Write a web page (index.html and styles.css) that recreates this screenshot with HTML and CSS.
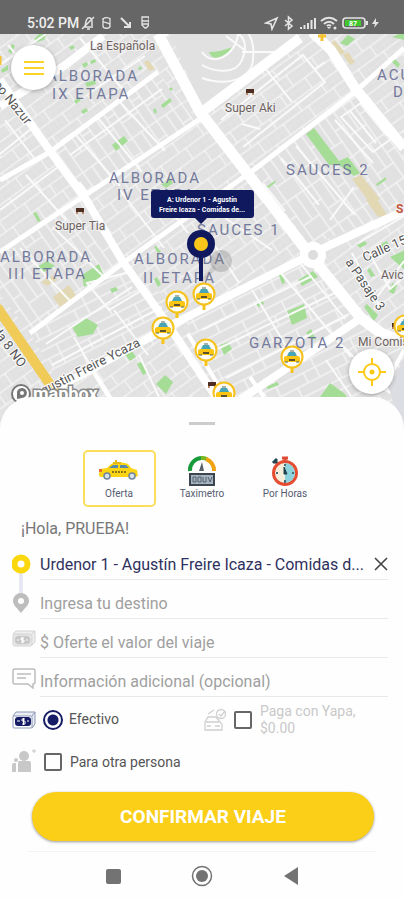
FILE: index.html
```html
<!DOCTYPE html>
<html lang="es">
<head>
  <meta charset="UTF-8">
  <meta name="viewport" content="width=device-width, initial-scale=1">
  <title>Confirmar viaje</title>
  <link rel="stylesheet" href="styles.css">
</head>
<body>
  <header class="status-bar">
    <span class="clock">5:02 PM</span>
    <svg class="status-left" width="68" height="16" viewBox="0 0 68 16" fill="none" stroke="#e4e4e4" stroke-width="1.5">
      <path d="M3 12h9M4 11c1-2 0-6 3-8 3-1 4 2 4 4v4M6 14h3M13 2L1 14"/>
      <path d="M29 4c-1-2-7-2-7 1v1c0 2 7 1 7 4v1c0 3-7 3-7 0M22 3v9M29 3v9" stroke-width="1.3"/>
      <path d="M40 3l9 9M43 12h6V7" stroke-width="2"/>
      <path d="M61 2h7v8l-3 3h-1l-3-3zM61 6h7M61 9h7" stroke-width="1.3"/>
    </svg>
    <svg class="status-right" width="116" height="16" viewBox="0 0 116 16" fill="none" stroke="#e4e4e4" stroke-width="1.6">
      <path d="M2 8l11-5-5 11-1-5z"/>
      <path d="M21 5l7 6-3.500 3V2L28 5l-7 6"/>
      <path d="M37 14v-2M40.500 14v-4M44 14V8M47.500 14V5M51 14V3" stroke-width="2"/>
      <path d="M57 6c5-4 11-4 16 0M60 9c3-3 7-3 10 0M63 11c1-1 3-1 4 0" stroke-width="2"/>
      <path d="M65 14l-2-2h4z" fill="#e4e4e4" stroke="none"/>
      <circle cx="71" cy="13" r="1.500" fill="#e4e4e4" stroke="none"/>
      <rect x="79" y="3" width="22" height="10" rx="3"/>
      <rect x="81" y="5" width="16" height="6" fill="#41c72c" stroke="none"/>
      <path d="M103 6v4" stroke-width="2"/>
      <text class="battery-text" x="89" y="11" text-anchor="middle">87</text>
      <path d="M112 3l-4 6h3l-1 4 5-6h-3z" fill="#e4e4e4" stroke="none"/>
    </svg>
  </header>

  <main class="map">
    <svg class="map-canvas" viewBox="0 34 404 400" preserveAspectRatio="xMidYMin slice" role="img" aria-label="Mapa">
      <defs>
        <pattern id="lots" width="31" height="38" patternUnits="userSpaceOnUse" patternTransform="rotate(-36)">
          <path d="M0 1h31M0 14h31M0 27h31M1 0v14M15 14v13M24 27v11" stroke="#f4f4f4" stroke-width="1.500" fill="none"/>
          <path d="M0 7h31M0 20h31M0 33h31M5 0v38M10 0v38M20 0v38M27 0v38" stroke="#e8e8e8" stroke-width="0.600" fill="none"/>
        </pattern>
        <pattern id="blocks" width="47" height="30" patternUnits="userSpaceOnUse" patternTransform="rotate(55)">
          <path d="M0 1h47M0 11h47M0 20h30M1 0v30M30 11v19M18 0v11" stroke="#f4f4f4" stroke-width="1.500" fill="none"/>
        </pattern>
        <pattern id="garzota" width="44" height="32" patternUnits="userSpaceOnUse" patternTransform="rotate(-27)">
          <path d="M0 1h44M0 12h44M0 22h44M1 0v12M26 12v20M13 22v10" stroke="#f4f4f4" stroke-width="1.500" fill="none"/>
        </pattern>
        <g id="taxi-pin">
          <path d="M0 10v6" stroke="#f6c21c" stroke-width="3"/>
          <circle r="10.500" fill="#fffdf3" stroke="#f6c21c" stroke-width="2"/>
          <path d="M-5-1l2-4h6l2 4z" fill="#48a5b5"/>
          <path d="M-8 1c0-2 3-2 3-2H5s3 0 3 2v4H-8z" fill="#fbc511"/>
          <path d="M-3 3h6" stroke="#5c5230" stroke-width="2"/>
          <path d="M-7 5h3M4 5h3M-2-6h4" stroke="#4e685c"/>
        </g>
        <g id="shop">
          <path d="M-4-3h8v4h-8z" fill="#4e2e20"/>
          <path d="M-3 1v2M3 1v2" stroke="#b98968" stroke-width="2"/>
        </g>
      </defs>

      <rect y="34" width="404" height="400" fill="#e1e1e1"/>
      <rect y="34" width="404" height="400" fill="url(#lots)"/>
      <path d="M50 152L158 72 197 120 88 195zM0 258L85 195 125 262 30 333 0 295zM255 172L355 94 404 153V210L310 245z" fill="#e1e1e1"/>
      <path d="M50 152L158 72 197 120 88 195zM0 258L85 195 125 262 30 333 0 295zM255 172L355 94 404 153V210L310 245z" fill="url(#blocks)"/>
      <path d="M30 333L125 262 187 317 60 385zM187 317L305 257 404 345V434H215z" fill="#e1e1e1"/>
      <path d="M30 333L125 262 187 317 60 385zM187 317L305 257 404 345V434H215z" fill="url(#garzota)"/>
      <path d="M170 34h130l-98 74z" fill="#e1e1e1"/>

      <!-- parks and yellow lots -->
      <g fill="#a5dd96">
        <path d="M34 39l6-6h7l-3 7-7 2zM8 51l4-7 3 2-4 8zM1 70l7-5v5l-6 3zM69 47l4-2 2 3-4 2z"/>
        <path d="M82 64l5-2 1 3-4 3zM90 61l5-2 1 3-5 2zM85 83l10-3 1 4-9 3zM74 101l5-4 2 3-5 4zM81 111l5-3 2 3-5 3zM138 68l3-2 1 3-3 1z"/>
        <path d="M112 145l12-9 4 5-12 10zM161 105l9-7 2 3-9 7zM153 110l2-2 2 4-2 2zM169 89l2-2 2 2-2 2z"/>
        <path d="M306 134l8-6 25 33 9-4 12 16-6 3-15-11-10 0zM340 43l8-8 7 4-8 7zM391 61l3-3 6 6-2 4zM392 37l7-3h5v6z"/>
        <path d="M209 52c8 0 15-2 24-5-3 5-7 8-14 10-6 2-8-1-10-5z"/>
        <path d="M82 275l17-11 5 12-20 11zM33 213l3-1 5 9-3 1zM35 268l12-7 8 5-11 6zM110 289l6-2 2 3-6 3zM72 327l14-9 12 7-5 9-15 3zM124 353l8-2 4 6-6 4zM137 364l4-2 7 10-5 3zM156 384l9-9 8 7-7 12zM154 247l2-1 5 6-3 1zM154 279l3-2 4 7-3 3z"/>
        <path d="M298 280l15-9 5 6-16 9zM256 303l6-4 2 5-6 3zM287 311l17-7 3 14-15 7zM279 275l4-1 2 9-3 1zM306 333l5-4 5 11-6-2zM220 345l8-3 4 7-8 6zM266 387l11-5 2 3-11 4zM320 397l10-14 15 11 6 10h-37zM364 307l3-3 11 11-4 6zM390 257l15-7v20zM379 245l8-4 2 4-7 3zM357 245l8-4 2 3-7 4zM367 270l3-2 5 8-4 1zM389 292l3-9 5 2-3 9z"/>
        <path d="M266 187l10-7-1 3-8 6zM376 184l10-7v3l-9 6zM161 184l6-2 2-5 4 6-7 5z"/>
      </g>
      <g fill="#e3d8b4">
        <path d="M329 46l5-6 11 12-4 3zM343 55l5-3 7 10-5 3zM352 179l9-4 19 24-10 4zM366 200l9-4 12 19-9 2zM144 62l4-2 7 9-6 2zM53 297l16-12 8 12-17 10zM41 282l13-7 3 5-10 6z"/>
      </g>

      <!-- streets -->
      <g fill="none" stroke="#fafafa" stroke-width="2">
        <path d="M202 65c12 7 34 10 40-5 5-12 4-20-3-26M202 78c22 8 49 3 51-18 1-12 0-18-4-26M202 52c11 16 34 3 36-18M242 52h34M226 36l21 16"/>
        <path d="M221 120l82-65 22 27-82 65M265 68l27 34M242 124l18 5M315 69l10-7M75 134l45 52M98 118l44 54M119 101l46 50M60 142l89-62M70 155l92-66"/>
        <path d="M281 158l38 47M263 183l22 28M296 146l59 69M335 120l38 43M341 117l27-19 30 36-25 18zM350 111l26 32M360 103l27 33"/>
        <path d="M252 290l34 56M279 271l72 86M301 264l44 55M202 330l110-54M211 352l128-61M226 378l122-63M326 360l25 36M343 346l31 32"/>
        <path d="M20 248l52 55M53 227l53 52M87 283l22 27 35-21-14-17zM46 344l86-57M52 365l110-58M74 337l23 40M114 310l34 45M98 376l14 22M139 355l20 42"/>
        <path d="M8 45l33 39M80 38l45 54M0 65l46-31M91 92l54-36M5 120l32 42M0 154l36-29M26 175l40 45M0 210l58-43M120 190l44 58M164 202l24 31"/>
        <path d="M360 242l44-26M370 255l20 34 14-12M374 301l30-40M352 253l27 52M330 220l24-33M225 218l47 32M239 283l-24-37"/>
      </g>
      <g fill="none" stroke="#fff" stroke-linejoin="round">
        <path d="M0 106L64 66 103 36" stroke-width="8"/>
        <path d="M0 180L50 152 158 72M0 252L87 194 200 119M30 333L127 260 255 169 355 92 404 48" stroke-width="5"/>
        <path d="M0 80L50 151 87 201 123 262 167 323 222 406" stroke-width="8"/>
        <path d="M158 34L200 112 268 200 310 255 361 318 381 333 404 342" stroke-width="11"/>
        <path d="M202 112L300 38M312 32L331 50 355 88 404 148" stroke-width="10"/>
        <path d="M404 211L330 245 187 317 57 388M361 318L234 404M87 197l-10-13" stroke-width="8"/>
        <path d="M168 34h-7M404 350l-20 38 20 12M188 334l39 66M250 377l14 20M90 366l22 36" stroke-width="4"/>
        <circle cx="313" cy="255" r="9" fill="#ddd" stroke-width="8"/>
      </g>
      <path d="M-3 307L62 402" stroke="#f0cb58" stroke-width="10"/>
      <path d="M0 56v9M322 34v7M318 36h8" stroke="#f5c331" stroke-width="3"/>
      <path d="M404 358l-15 31 15 45z" fill="#dcdce3"/>

      <g class="area-label">
        <text x="47" y="81">ALBORADA</text>
        <text x="52" y="99">IX ETAPA</text>
        <text x="109" y="183">ALBORADA</text>
        <text x="117" y="200">IV ETAPA</text>
        <text x="0" y="262">ALBORADA</text>
        <text x="8" y="279">III ETAPA</text>
        <text x="134" y="264">ALBORADA</text>
        <text x="143" y="283">II ETAPA</text>
        <text x="197" y="235">SAUCES 1</text>
        <text x="286" y="175">SAUCES 2</text>
        <text x="249" y="348">GARZOTA 2</text>
        <text x="377" y="80">ACU</text>
        <text x="393" y="97">D</text>
      </g>
      <g class="place-label">
        <text x="90" y="50">La Española</text>
        <text x="225" y="112">Super Aki</text>
        <text x="55" y="230">Super Tia</text>
        <text x="358" y="346">Mi Comis</text>
        <text x="381" y="279">Avic</text>
        <text class="alert" x="396" y="213">S</text>
      </g>
      <g class="street-label">
        <text transform="translate(-7 85) rotate(51)">eo Nazur</text>
        <text transform="translate(-8 331) rotate(53)">da 8 NO</text>
        <text transform="translate(36 399) rotate(-27)">Agustin Freire Ycaza</text>
        <text transform="translate(365 262) rotate(-24)">Calle 15t</text>
        <text transform="translate(345 262) rotate(56)">a Pasaje 3</text>
      </g>

      <use href="#shop" x="250" y="92"/>
      <use href="#shop" x="80" y="211"/>
      <use href="#shop" x="212" y="385"/>
      <use href="#shop" x="396" y="326"/>
      <use href="#taxi-pin" x="177" y="302"/>
      <use href="#taxi-pin" x="163" y="328"/>
      <use href="#taxi-pin" x="206" y="350"/>
      <use href="#taxi-pin" x="292" y="357"/>
      <use href="#taxi-pin" x="224" y="393"/>
      <use href="#taxi-pin" x="405" y="326"/>

      <circle cx="221" cy="261" r="11" fill="#777" opacity="0.300"/>
      <path d="M201 281l14-14" stroke="#777" stroke-width="4" opacity="0.250"/>
      <path d="M201 255v26" stroke="#10195e" stroke-width="4"/>
      <circle cx="201" cy="244" r="14" fill="#10195e"/>
      <circle cx="201" cy="244" r="7" fill="#fbc61a"/>
      <use href="#taxi-pin" x="204" y="294"/>
      <path d="M154 190h97q3 0 3 3v22q0 3-3 3h-44l-6 6-6-6h-41q-3 0-3-3v-22q0-3 3-3z" fill="#10195e"/>
      <g class="callout-text">
        <text x="202" y="202">A: Urdenor 1 - Agustín</text>
        <text x="202" y="212">Freire Icaza - Comidas de...</text>
      </g>

      <circle cx="21" cy="394" r="9" fill="#fff" stroke="#777" stroke-width="2"/>
      <path d="M17 399v-5a5 5 0 1 1 5 4z" fill="#777"/>
      <circle cx="22" cy="393" r="2" fill="#fff"/>
      <text class="map-logo" x="33" y="400">mapbox</text>
    </svg>

    <button class="round-button menu-button" type="button" aria-label="Menú">
      <svg width="20" height="16" viewBox="0 0 20 16" stroke="#fbd429" stroke-width="2"><path d="M0 2h20M0 8h20M0 14h20"/></svg>
    </button>
    <button class="round-button locate-button" type="button" aria-label="Mi ubicación">
      <svg width="28" height="28" viewBox="0 0 28 28" fill="none" stroke="#fbcb17" stroke-width="2"><circle cx="14" cy="14" r="8"/><circle cx="14" cy="14" r="2.500" fill="#fbcb17" stroke="none"/><path d="M14 0v7M14 21v7M0 14h7M21 14h7"/></svg>
    </button>
  </main>

  <form class="sheet">
    <div class="handle"></div>

    <div class="services">
      <button class="service selected" type="button">
        <svg width="42" height="30" viewBox="0 0 42 30">
          <path d="M1 18l1-5 7-1 4-4c4-2 13-2 17 0l3 4 6 2 1 6-3 1H2l-1-2z" fill="#fbd514"/>
          <path d="M11 12l4-3h5v3zM22 9h6l3 3h-9z" fill="#568aa8"/>
          <path d="M18 6V4M15 7h8" stroke="#e5b912" stroke-width="2"/>
          <path d="M14 16h14" stroke="#8b7520" stroke-dasharray="2 1" stroke-width="2"/>
          <path d="M1 13h3v3H1z" fill="#e86c31"/>
          <g fill="#d8e3ec" stroke="#70849b" stroke-width="1.500"><circle cx="9" cy="20" r="3"/><circle cx="34" cy="20" r="3"/></g>
        </svg>
        <span>Oferta</span>
      </button>
      <button class="service" type="button">
        <svg width="32" height="30" viewBox="0 0 32 30" fill="none">
          <path d="M4 15A12 12 0 0 1 15 2" stroke="#179b3a" stroke-width="4"/>
          <path d="M15 2a12 12 0 0 1 6 1" stroke="#78b823" stroke-width="4"/>
          <path d="M20 3a12 12 0 0 1 8 12" stroke="#efa312" stroke-width="4"/>
          <path d="M16 6l-3 9h5z" fill="#59616a"/>
          <rect x="4" y="18" width="24" height="11" fill="#a7b4bf" stroke="#3b4650" stroke-width="2"/>
          <path d="M7 21v5h3v-5zM12 21v5h3v-5zM17 21v5h3v-5M22 21l2 5 2-5" stroke="#52616f"/>
        </svg>
        <span>Taximetro</span>
      </button>
      <button class="service" type="button">
        <svg width="30" height="30" viewBox="0 0 30 30" fill="none">
          <path d="M12 2h6M15 2v4" stroke="#df4b34" stroke-width="3"/>
          <path d="M3 7l4-4M5 5l3 3" stroke="#244651" stroke-width="3"/>
          <circle cx="15" cy="17" r="11.500" fill="#f5eedb" stroke="#e44d32" stroke-width="3"/>
          <path d="M15 7a10 10 0 0 1 0 20z" fill="#8dd2dc"/>
          <path d="M15 8v2M15 24v3M6 17h2M22 17h2" stroke="#4d6d76" stroke-width="2"/>
          <path d="M14 11l3 7h-3z" fill="#23434d" stroke="#23434d"/>
        </svg>
        <span>Por Horas</span>
      </button>
    </div>

    <p class="greeting">¡Hola, PRUEBA!</p>

    <div class="field">
      <label class="field-icon" for="origin" aria-label="Origen">
        <svg width="24" height="39" viewBox="0 0 24 39"><path d="M9 26v13" stroke="#e8e8f4" stroke-width="4"/><circle cx="9" cy="23" r="6.500" fill="#fff" stroke="#fbd80e" stroke-width="6"/></svg>
      </label>
      <input class="origin" id="origin" type="text" value="Urdenor 1 - Agustín Freire Icaza - Comidas d...">
      <button class="clear" type="button" aria-label="Borrar origen">
        <svg width="14" height="14" viewBox="0 0 14 14" stroke="#444" stroke-width="1.600"><path d="M1 1l12 12M13 1L1 13"/></svg>
      </button>
    </div>
    <div class="field">
      <label class="field-icon" for="destination" aria-label="Destino">
        <svg width="24" height="39" viewBox="0 0 24 39"><path d="M9 0v14" stroke="#e8e8f4" stroke-width="4"/><path d="M9 33c-4-5-8-8-8-12a8 8 0 0 1 16 0c0 4-4 7-8 12z" fill="#bdbdbd"/><circle cx="9" cy="21" r="3" fill="#fff"/></svg>
      </label>
      <input id="destination" type="text" placeholder="Ingresa tu destino">
    </div>
    <div class="field">
      <label class="field-icon" for="offer" aria-label="Oferta">
        <svg width="24" height="18" viewBox="0 0 24 18" fill="none" stroke="#d2d2d2"><path d="M1 4l3-3h19v11l-3 3M20 4l3-3" fill="#f0f0f0"/><rect x="1" y="4" width="19" height="12" rx="2" fill="#e9e9e9"/><rect x="3" y="6" width="15" height="8" rx="3" fill="#c6c6c6"/><path d="M12 8H9v2h3v2H9M10.500 7v6M5 10h2M14 10h2" stroke="#fff"/></svg>
      </label>
      <input id="offer" type="text" placeholder="$ Oferte el valor del viaje">
    </div>
    <div class="field">
      <label class="field-icon" for="notes" aria-label="Información">
        <svg width="24" height="24" viewBox="0 0 24 24" fill="none" stroke="#bdbdbd" stroke-width="1.500"><path d="M3 3h18q2 0 2 2v11q0 2-2 2v4l-5-4H3q-2 0-2-2V5q0-2 2-2zM5 8h14M5 12h9"/></svg>
      </label>
      <input id="notes" type="text" placeholder="Información adicional (opcional)">
    </div>

    <div class="options">
      <div class="option">
        <svg class="option-icon" width="24" height="18" viewBox="0 0 24 18" fill="none" stroke="#8d98b5"><path d="M1 5l3-4h19v12l-3 4M20 5l3-4" fill="#e9eef5"/><rect x="1" y="5" width="19" height="12" rx="1" fill="#fff"/><rect x="3" y="6" width="16" height="9" rx="3" fill="#151b65" stroke="none"/><path d="M13 8h-3v2h3v3h-3M11.500 7v7M5 10h3M15 10h2" stroke="#fff"/></svg>
        <input id="cash" type="radio" name="payment" checked>
        <label for="cash">Efectivo</label>
      </div>
      <div class="option yapa">
        <svg class="option-icon" width="24" height="24" viewBox="0 0 24 24" fill="none" stroke="#d0d0d0" stroke-width="1.300"><path d="M3 14l3-5h8l4 5 2 2v6H3zM4 14h13M5 18h4M13 18h5"/><circle cx="19" cy="6" r="4.500"/><path d="M17 6l2 2 4-5M6 6l6-4"/></svg>
        <input id="yapa" type="checkbox">
        <label for="yapa">Paga con Yapa, $0.00</label>
      </div>
    </div>
    <div class="option other">
      <svg class="option-icon" width="24" height="26" viewBox="0 0 24 26" fill="#c8c8c8"><circle cx="12" cy="7" r="5"/><path d="M7 12h10q2 0 2 2v9H6v-9q0-2 1-2z"/><circle cx="4" cy="11" r="2"/><path d="M0 16q0-2 2-2h2v9H0z"/><path d="M22 0v4M20 2h4" stroke="#c8c8c8"/></svg>
      <input id="other" type="checkbox">
      <label for="other">Para otra persona</label>
    </div>

    <button class="confirm" type="submit">CONFIRMAR VIAJE</button>
  </form>

  <nav class="system-nav">
    <button type="button" aria-label="Recientes"><svg width="22" height="22" viewBox="0 0 22 22"><rect x="4" y="4" width="15" height="15" rx="2" fill="#737373"/></svg></button>
    <button type="button" aria-label="Inicio"><svg width="22" height="22" viewBox="0 0 22 22"><circle cx="11" cy="11" r="9.500" fill="none" stroke="#737373" stroke-width="1.500"/><circle cx="11" cy="11" r="6" fill="#737373"/></svg></button>
    <button type="button" aria-label="Atrás"><svg width="22" height="22" viewBox="0 0 22 22"><path d="M4 11l14-9v18z" fill="#737373"/></svg></button>
  </nav>
</body>
</html>
```

FILE: styles.css
```css
* {
  box-sizing: border-box;
}
body {
  font-family: Roboto, "Liberation Sans", sans-serif;
  background: #fefefe;
  margin: 0;
  min-height: 100vh;
  display: flex;
  flex-direction: column;
}
button {
  font-family: inherit;
  background: none;
  border: none;
  padding: 0;
  cursor: pointer;
}
svg {
  display: block;
  flex: none;
}

.status-bar {
  display: flex;
  align-items: flex-end;
  background: #666;
  color: #eee;
  height: 34px;
  padding: 0 24px 3px 27px;
}
.clock {
  font-size: 14px;
  font-weight: 500;
  line-height: 16px;
}
.status-left {
  margin-left: 2px;
}
.status-right {
  margin-left: auto;
}
.battery-text {
  font-size: 7px;
  font-weight: bold;
  fill: #fff;
  stroke: none;
}

.map {
  position: relative;
  flex: 1;
  min-height: 280px;
  margin-bottom: -32px;
  overflow: hidden;
}
.map-canvas {
  position: absolute;
  width: 100%;
  height: 100%;
}
.area-label {
  font-size: 15px;
  letter-spacing: 2px;
  fill: #747a9c;
}
.place-label {
  font-size: 12px;
  fill: #6e625e;
  stroke: #f0f0f0;
  stroke-width: 2px;
  paint-order: stroke;
}
.place-label .alert {
  fill: #c4553c;
  font-weight: bold;
}
.street-label {
  font-size: 13px;
  fill: #555;
  stroke: #fff;
  stroke-width: 2px;
  paint-order: stroke;
}
.callout-text {
  font-size: 7px;
  font-weight: bold;
  fill: #fff;
  text-anchor: middle;
}
.map-logo {
  font-size: 18px;
  font-weight: bold;
  fill: #fff;
  stroke: #888;
  stroke-width: 3px;
  paint-order: stroke;
}
.round-button {
  position: absolute;
  display: flex;
  align-items: center;
  justify-content: center;
  width: 45px;
  height: 45px;
  border-radius: 50%;
  background: #fff;
  box-shadow: 0 1px 4px rgba(0, 0, 0, 0.3);
}
.menu-button {
  top: 11px;
  left: 11px;
}
.locate-button {
  right: 10px;
  bottom: 35px;
}

.sheet {
  position: relative;
  display: flex;
  flex-direction: column;
  background: #fefefe;
  border-radius: 32px 32px 0 0;
  padding: 25px 12px 10px;
}
.handle {
  width: 26px;
  height: 3px;
  background: #ccc;
  align-self: center;
}
.services {
  display: flex;
  justify-content: center;
  gap: 10px;
  margin-top: 25px;
}
.service {
  display: flex;
  flex-direction: column;
  align-items: center;
  justify-content: center;
  gap: 1px;
  width: 73px;
  height: 57px;
  border: 2px solid transparent;
  border-radius: 5px;
  color: #555b70;
  font-size: 10px;
  line-height: 14px;
}
.service.selected {
  border-color: #fbdf5a;
}
.greeting {
  margin: 12px 9px 2px;
  color: #777;
  font-size: 16px;
  line-height: 20px;
}
.field {
  display: flex;
  align-items: center;
  height: 39px;
}
.field-icon {
  width: 28px;
  flex: none;
}
.field input {
  flex: 1;
  min-width: 0;
  align-self: stretch;
  margin-right: 4px;
  border: none;
  border-bottom: 1px solid #e9e9e9;
  padding: 8px 0 0;
  background: none;
  color: #2f315f;
  font-family: inherit;
  font-size: 16px;
  text-overflow: ellipsis;
  outline: none;
}
.field input::placeholder {
  color: #a0a0a0;
  opacity: 1;
}
.field .origin {
  padding-right: 16px;
}
.clear {
  margin: 0 4px 0 -18px;
  padding-top: 6px;
}

.options {
  display: grid;
  grid-template-columns: 1fr 1fr;
}
.option {
  display: flex;
  align-items: center;
  height: 45px;
  color: #555;
  font-size: 14px;
  line-height: 17px;
}
.option input {
  appearance: none;
  flex: none;
  width: 18px;
  height: 18px;
  margin: 0 8px;
  border: 2px solid #666;
  border-radius: 2px;
}
.option input[type="radio"] {
  width: 20px;
  height: 20px;
  margin: 0 6px 0 7px;
  border-color: #171c66;
  border-radius: 50%;
  background: radial-gradient(circle, #171c66 0 5px, #fff 6px);
}
.option input[type="checkbox"]:checked {
  background: #171c66;
}
.yapa label {
  color: #c9c9c9;
  max-width: 110px;
}
.other {
  height: 40px;
}
.confirm {
  height: 49px;
  margin: 10px 18px 0 20px;
  border-radius: 25px;
  background: #fbce17;
  color: #fff;
  font-size: 19px;
  font-weight: bold;
  box-shadow: 0 1px 3px rgba(0, 0, 0, 0.4);
}

.system-nav {
  display: flex;
  justify-content: center;
  gap: 67px;
  height: 49px;
  margin: 0 28px;
  padding-top: 13px;
  border-top: 1px solid #f3f3f3;
}
.system-nav button {
  height: 22px;
}
```
